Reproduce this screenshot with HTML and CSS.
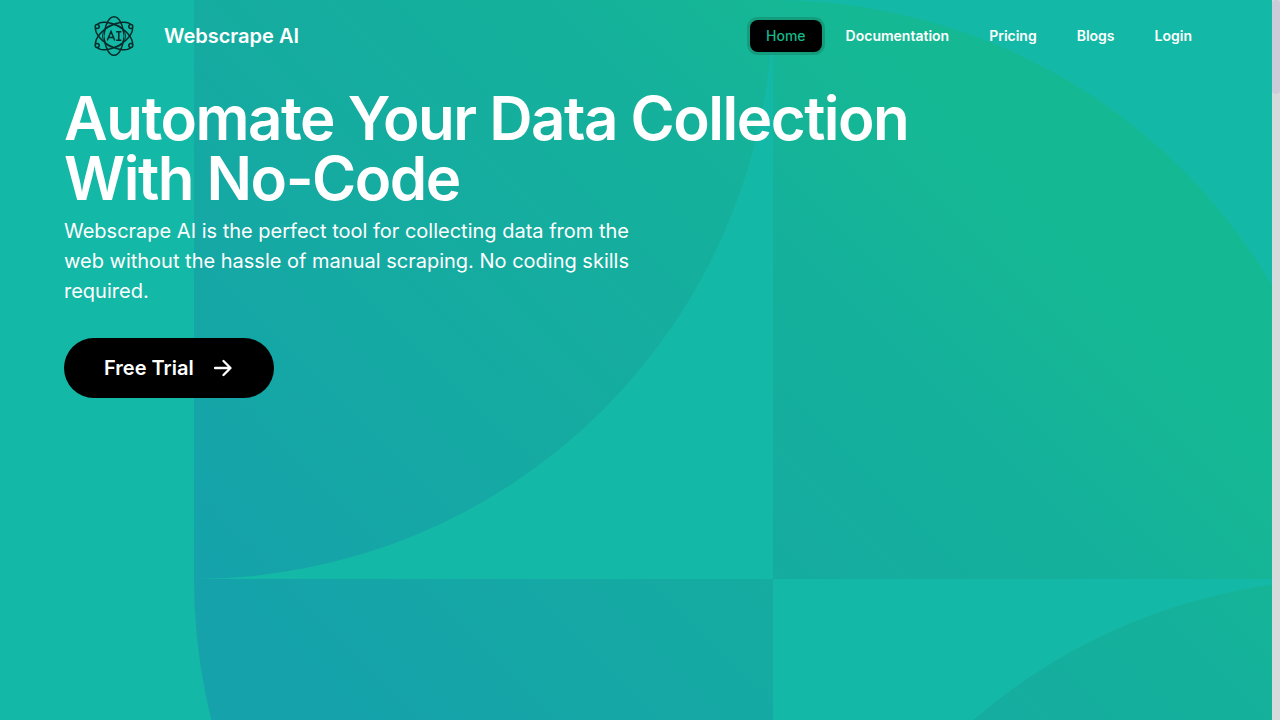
FILE: index.html
```html
<!DOCTYPE html>
<html lang="en">
<head>
    <meta charset="UTF-8">
    <meta name="viewport" content="width=device-width, initial-scale=1.0">
    <title>Webscrape AI</title>
    <link rel="stylesheet" href="styles.css">
</head>
<body>
    <div class="page">
        <svg class="pattern" width="1158" height="1158" viewBox="0 0 1158 1158" aria-hidden="true">
            <defs>
                <linearGradient id="fade" gradientUnits="userSpaceOnUse" x1="0" y1="579" x2="680" y2="-101">
                    <stop offset="0" stop-color="#15a2ab"/>
                    <stop offset="0.4" stop-color="#15aba1"/>
                    <stop offset="0.7" stop-color="#15b19b"/>
                    <stop offset="0.87" stop-color="#15b894"/>
                    <stop offset="1" stop-color="#14b892"/>
                </linearGradient>
            </defs>
            <g fill="url(#fade)">
                <path d="M0 0H579A579 579 0 0 1 0 579Z"/>
                <path d="M579 579V0A579 579 0 0 1 1158 579Z"/>
                <path d="M579 579V1158A579 579 0 0 1 0 579Z"/>
                <path d="M1158 1158H579A579 579 0 0 1 1158 579Z"/>
            </g>
        </svg>

        <header class="header">
            <a class="brand" href="#">
                <svg class="logo" viewBox="0 0 40 40" fill="none" stroke="#062b28" stroke-width="1.5" aria-hidden="true">
                    <ellipse cx="20" cy="20" rx="9.5" ry="19.2"/>
                    <ellipse cx="20" cy="20" rx="10.5" ry="20.5" transform="rotate(60 20 20)"/>
                    <ellipse cx="20" cy="20" rx="10.5" ry="20.5" transform="rotate(-60 20 20)"/>
                    <circle cx="20" cy="20" r="11.5" stroke-width="1"/>
                    <g fill="#14b8a6">
                        <circle cx="3.2" cy="10.6" r="2"/>
                        <circle cx="36.8" cy="10.6" r="2"/>
                        <circle cx="3.2" cy="29.4" r="2"/>
                        <circle cx="36.8" cy="29.4" r="2"/>
                    </g>
                    <circle cx="20" cy="20" r="9.6" fill="#14b8a6" stroke="none"/>
                    <path d="M13.2 24.5L17 15.5L20.8 24.5M14.5 21.5H19.5M22.2 15.7H27.4M22.2 24.3H27.4M24.8 15.7V24.3"/>
                </svg>
                <span>Webscrape AI</span>
            </a>
            <nav class="nav">
                <a class="nav-link active" href="#">Home</a>
                <a class="nav-link" href="#">Documentation</a>
                <a class="nav-link" href="#">Pricing</a>
                <a class="nav-link" href="#">Blogs</a>
                <a class="nav-link" href="#">Login</a>
            </nav>
        </header>

        <main class="hero">
            <h1>Automate Your Data Collection With No-Code</h1>
            <p>Webscrape AI is the perfect tool for collecting data from the web without the hassle of manual scraping. No coding skills required.</p>
            <button class="trial" type="button">
                Free Trial
                <svg width="18" height="18" viewBox="0 0 18 18" fill="none" stroke="currentColor" stroke-width="2.3" stroke-linecap="round" stroke-linejoin="round" aria-hidden="true">
                    <path d="M1 9H16M9.5 2L16.5 9L9.5 16"/>
                </svg>
            </button>
        </main>
    </div>
    <div class="scrollbar"><div class="thumb"></div></div>
</body>
</html>
```
FILE: styles.css
```css
* {
    box-sizing: border-box;
}
body {
    margin: 0;
    display: flex;
    height: 100vh;
    overflow: hidden;
    font-family: Inter, sans-serif;
    color: #fff;
}
.page {
    position: relative;
    flex: 1;
    overflow: hidden;
    background-color: #14b8a6;
}
/* background shapes sit behind everything */
.pattern {
    position: absolute;
    top: 0;
    left: 194px;
}
.header {
    position: relative;
    display: flex;
    align-items: center;
    justify-content: space-between;
    height: 72px;
    padding: 0 64px 0 94px;
}
.brand {
    display: flex;
    align-items: center;
    gap: 30px;
    font-size: 20px;
    font-weight: 600;
    color: #fff;
    text-decoration: none;
}
.logo {
    width: 40px;
    height: 40px;
}
.nav {
    display: flex;
    gap: 8px;
}
.nav-link {
    padding: 6px 16px;
    border-radius: 8px;
    font-size: 14px;
    line-height: 20px;
    font-weight: 600;
    color: #fff;
    text-decoration: none;
}
.nav-link.active {
    background-color: #000;
    color: #14b88a;
    font-weight: 500;
    box-shadow: 0 0 0 3px rgba(20, 140, 110, 0.6);
}
.hero {
    position: relative;
    padding: 16px 64px;
}
.hero h1 {
    max-width: 900px;
    margin: 0;
    font-size: 60px;
    line-height: 60px;
    font-weight: 600;
    letter-spacing: -0.025em;
}
.hero p {
    max-width: 576px;
    margin: 8px 0 32px;
    font-size: 20px;
    line-height: 30px;
}
.trial {
    display: flex;
    align-items: center;
    gap: 20px;
    height: 60px;
    padding: 0 42px 0 40px;
    border: 0;
    border-radius: 30px;
    background-color: #000;
    color: #fff;
    font-family: inherit;
    font-size: 20px;
    font-weight: 600;
    cursor: pointer;
}
.scrollbar {
    width: 8px;
    background-color: #d5dbdb;
}
.thumb {
    height: 94px;
    border-radius: 4px;
    background-color: #cbcbd9;
}
```
